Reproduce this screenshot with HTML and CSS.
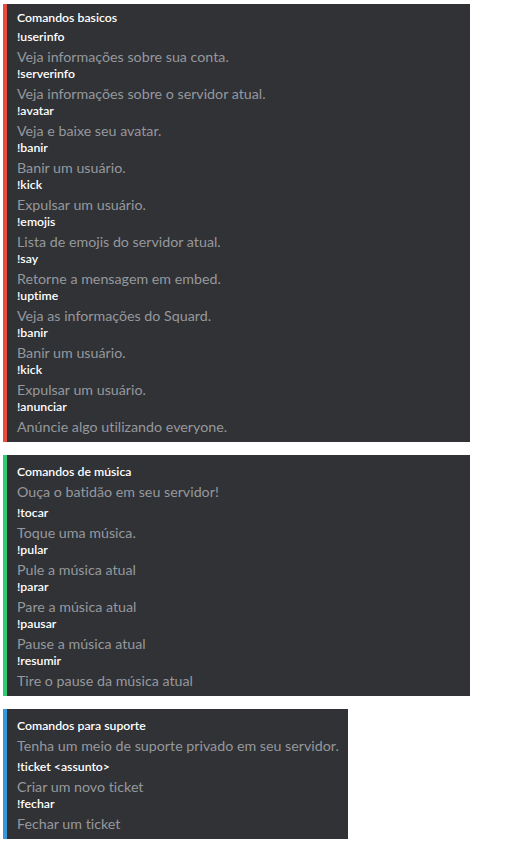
FILE: index.html
```html
<!DOCTYPE html>
<html lang="pt-BR">
<head>
<meta charset="utf-8">
<title>Comandos</title>
<link rel="stylesheet" href="styles.css">
</head>
<body>
<div class="embed embed-red embed-first">
  <div class="title">Comandos basicos</div>
  <div class="field"><div class="name">!userinfo</div><div class="value">Veja informações sobre sua conta.</div></div>
  <div class="field"><div class="name">!serverinfo</div><div class="value">Veja informações sobre o servidor atual.</div></div>
  <div class="field"><div class="name">!avatar</div><div class="value">Veja e baixe seu avatar.</div></div>
  <div class="field"><div class="name">!banir</div><div class="value">Banir um usuário.</div></div>
  <div class="field"><div class="name">!kick</div><div class="value">Expulsar um usuário.</div></div>
  <div class="field"><div class="name">!emojis</div><div class="value">Lista de emojis do servidor atual.</div></div>
  <div class="field"><div class="name">!say</div><div class="value">Retorne a mensagem em embed.</div></div>
  <div class="field"><div class="name">!uptime</div><div class="value">Veja as informações do Squard.</div></div>
  <div class="field"><div class="name">!banir</div><div class="value">Banir um usuário.</div></div>
  <div class="field"><div class="name">!kick</div><div class="value">Expulsar um usuário.</div></div>
  <div class="field"><div class="name">!anunciar</div><div class="value">Anúncie algo utilizando everyone.</div></div>
</div>
<div class="embed embed-green">
  <div class="title">Comandos de música</div>
  <div class="desc">Ouça o batidão em seu servidor!</div>
  <div class="field"><div class="name">!tocar</div><div class="value">Toque uma música.</div></div>
  <div class="field"><div class="name">!pular</div><div class="value">Pule a música atual</div></div>
  <div class="field"><div class="name">!parar</div><div class="value">Pare a música atual</div></div>
  <div class="field"><div class="name">!pausar</div><div class="value">Pause a música atual</div></div>
  <div class="field"><div class="name">!resumir</div><div class="value">Tire o pause da música atual</div></div>
</div>
<div class="embed embed-blue embed-narrow">
  <div class="title">Comandos para suporte</div>
  <div class="desc">Tenha um meio de suporte privado em seu servidor.</div>
  <div class="field"><div class="name">!ticket &lt;assunto&gt;</div><div class="value">Criar um novo ticket</div></div>
  <div class="field"><div class="name">!fechar</div><div class="value">Fechar um ticket</div></div>
</div>
</body>
</html>
```
FILE: styles.css
```css
* { box-sizing: border-box; }
html, body { background: #ffffff; }
body {
  margin: 4px 0 0 3px;
  font-family: Lato, "Noto Sans", sans-serif;
  font-variant-ligatures: none;
  font-feature-settings: "liga" 0, "clig" 0;
  display: flex;
  flex-direction: column;
  gap: 13px;
}
.embed {
  width: 467px;
  background: #303236;
  border-left: 4px solid #e74c3c;
  padding: 9px 8px 7px 10px;
  white-space: nowrap;
}
.embed-first { padding-top: 6px; }
.embed-red { border-left-color: #e74c3c; }
.embed-green { border-left-color: #2ecc71; }
.embed-blue { border-left-color: #3498db; }
.embed-narrow { width: 345px; }
.title {
  color: #ffffff;
  font-size: 12.25px;
  font-weight: 600;
  line-height: 16px;
  margin-bottom: 2px;
}
.desc {
  color: #96989d;
  font-size: 14.25px;
  line-height: 20px;
  margin-bottom: 2px;
}
.name {
  color: #ffffff;
  font-size: 12.25px;
  font-weight: 600;
  line-height: 17px;
}
.value {
  color: #96989d;
  font-size: 14.25px;
  line-height: 17px;
  margin-top: 3px;
}
```
